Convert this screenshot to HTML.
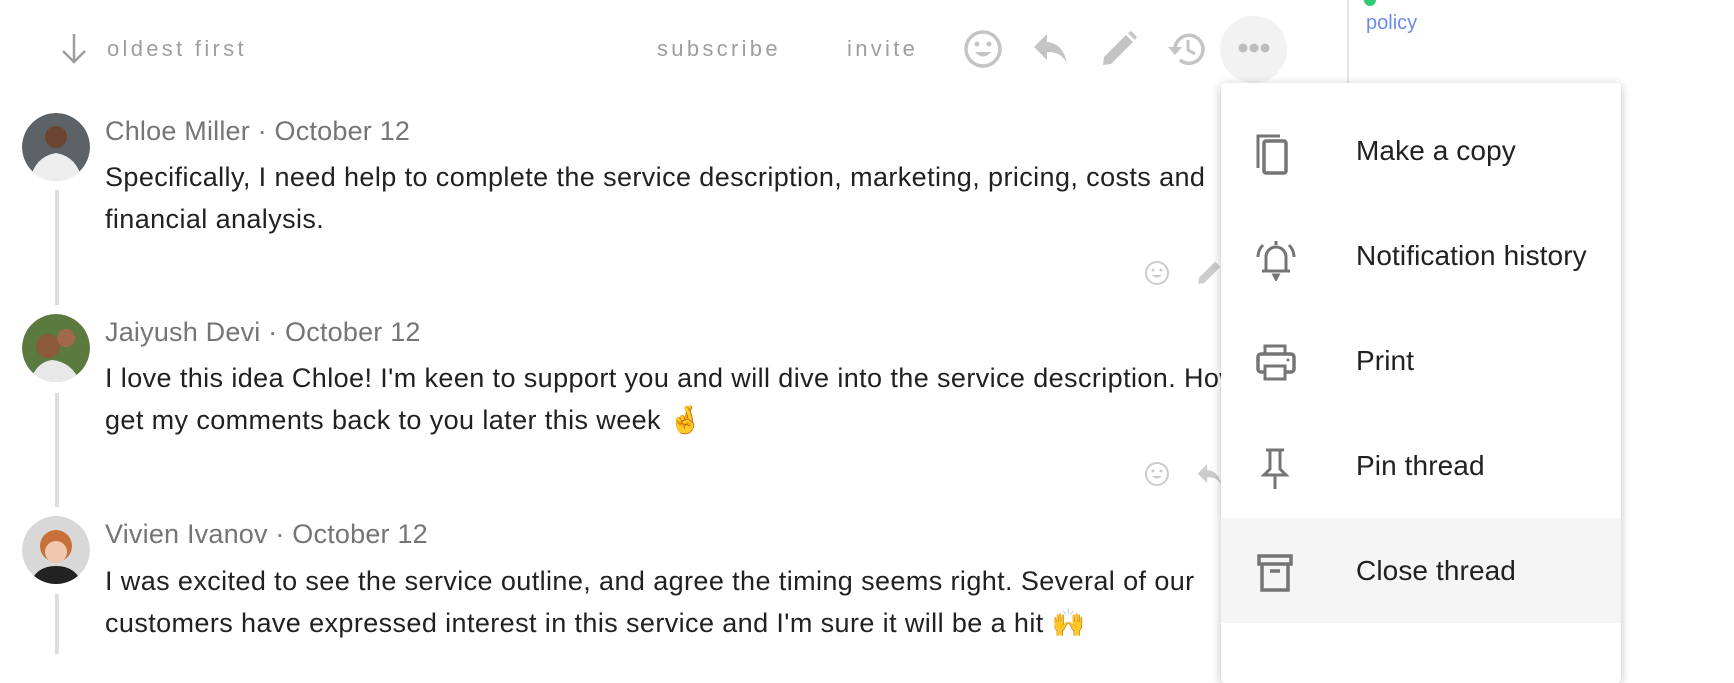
<!DOCTYPE html>
<html><head><meta charset="utf-8"><style>
*{margin:0;padding:0;box-sizing:border-box}
body{width:1734px;height:639px;overflow:hidden;background:#fff;font-family:"Liberation Sans",sans-serif;position:relative}
.abs{position:absolute}
.top{color:#9e9e9e;font-size:22px;letter-spacing:3.3px;top:36px}
.name{left:105px;font-size:27px;color:#757575;letter-spacing:0.2px;white-space:nowrap}
.body{left:105px;font-size:27px;color:#212121;line-height:42px;letter-spacing:0.4px;white-space:nowrap}
.av{left:22px;width:68px;height:68px;border-radius:50%}
.line{left:55px;width:4px;background:#ddd}
.menu{left:1221px;top:83px;width:400px;height:600px;background:#fff;border-radius:4px;box-shadow:0 2px 10px rgba(0,0,0,.25)}
.item{position:absolute;left:0;width:400px;height:105px}
.item span{position:absolute;left:135px;top:37px;font-size:28px;color:#212121;letter-spacing:0.1px}
.item svg{position:absolute;left:33px;top:34px}
</style></head><body>
<svg class="abs" style="left:58px;top:32px" width="32" height="34" viewBox="0 0 32 34"><path d="M16 2V30M5 19L16 30L27 19" stroke="#9e9e9e" stroke-width="2.5" fill="none"/></svg>
<div class="abs top" style="left:107px">oldest first</div>
<div class="abs top" style="left:657px">subscribe</div>
<div class="abs top" style="left:847px">invite</div>
<svg class="abs" style="left:963px;top:29px" width="40" height="40" viewBox="0 0 40 40"><circle cx="20" cy="20" r="17" fill="none" stroke="#c4c4c4" stroke-width="3.5"/><circle cx="14" cy="15" r="2.5" fill="#c4c4c4"/><circle cx="26" cy="15" r="2.5" fill="#c4c4c4"/><path d="M12 23Q20 32 28 23Z" fill="#c4c4c4"/></svg>
<svg class="abs" style="left:1032px;top:31px" width="38" height="36" viewBox="0 0 38 36"><path d="M15 3L2 16L15 29V21C25 21 31 24 35 33C33 21 27 12 15 11Z" fill="#c4c4c4"/></svg>
<svg class="abs" style="left:1100px;top:30px" width="38" height="38" viewBox="0 0 38 38"><path d="M3 35L4 27L26 5L33 12L11 34Z" fill="#c4c4c4"/><path d="M28 3L31 1L37 7L35 10Z" fill="#c4c4c4"/></svg>
<svg class="abs" style="left:1166px;top:29px" width="40" height="40" viewBox="0 0 40 40"><path d="M9 20A14 14 0 1 1 14 31" fill="none" stroke="#c4c4c4" stroke-width="3.5"/><path d="M2 18L9 26L16 18Z" fill="#c4c4c4"/><path d="M22 11V21L29 25" fill="none" stroke="#c4c4c4" stroke-width="3"/></svg>
<div class="abs" style="left:1220px;top:16px;width:67px;height:67px;border-radius:50%;background:#f2f2f2"></div>
<svg class="abs" style="left:1237px;top:41px" width="34" height="14"><circle cx="6" cy="7" r="4.5" fill="#bdbdbd"/><circle cx="17" cy="7" r="4.5" fill="#bdbdbd"/><circle cx="28" cy="7" r="4.5" fill="#bdbdbd"/></svg>
<div class="abs" style="left:1347px;top:0;width:2px;height:90px;background:#e6e6e6"></div>
<div class="abs" style="left:1364px;top:-6px;width:12px;height:12px;border-radius:50%;background:#2ecc71"></div>
<div class="abs" style="left:1366px;top:12px;font-size:20px;color:#6b8cf0">policy</div>

<svg class="abs av" style="top:113px" viewBox="0 0 68 68"><circle cx="34" cy="34" r="34" fill="#5d6266"/><path d="M8 68Q12 44 34 40Q56 44 60 68Z" fill="#eee"/><circle cx="34" cy="24" r="11" fill="#6b4532"/></svg>
<div class="abs line" style="top:190px;height:115px"></div>
<div class="abs name" style="top:116px">Chloe Miller · October 12</div>
<div class="abs body" style="top:156px">Specifically, I need help to complete the service description, marketing, pricing, costs and<br>financial analysis.</div>
<svg class="abs" style="left:1144px;top:260px" width="26" height="26" viewBox="0 0 26 26"><circle cx="13" cy="13" r="11" fill="none" stroke="#ccc" stroke-width="2"/><circle cx="9" cy="10" r="1.5" fill="#ccc"/><circle cx="17" cy="10" r="1.5" fill="#ccc"/><path d="M8 15Q13 20 18 15Z" fill="#ccc"/></svg>
<svg class="abs" style="left:1196px;top:258px" width="28" height="28" viewBox="0 0 38 38"><path d="M3 35L4 27L26 5L33 12L11 34Z" fill="#ccc"/></svg>

<svg class="abs av" style="top:314px" viewBox="0 0 68 68"><circle cx="34" cy="34" r="34" fill="#5a7a40"/><circle cx="26" cy="32" r="12" fill="#8a5a3a"/><circle cx="44" cy="24" r="9" fill="#a06a4a"/><path d="M8 68Q14 48 30 46Q50 48 58 68Z" fill="#e8e8e8"/></svg>
<div class="abs line" style="top:393px;height:114px"></div>
<div class="abs name" style="top:317px">Jaiyush Devi · October 12</div>
<div class="abs body" style="top:357px">I love this idea Chloe! I'm keen to support you and will dive into the service description. How<br>get my comments back to you later this week 🤞</div>
<svg class="abs" style="left:1144px;top:461px" width="26" height="26" viewBox="0 0 26 26"><circle cx="13" cy="13" r="11" fill="none" stroke="#ccc" stroke-width="2"/><circle cx="9" cy="10" r="1.5" fill="#ccc"/><circle cx="17" cy="10" r="1.5" fill="#ccc"/><path d="M8 15Q13 20 18 15Z" fill="#ccc"/></svg>
<svg class="abs" style="left:1196px;top:462px" width="28" height="26" viewBox="0 0 38 36"><path d="M15 3L2 16L15 29V21C25 21 31 24 35 33C33 21 27 12 15 11Z" fill="#ccc"/></svg>

<svg class="abs av" style="top:516px" viewBox="0 0 68 68"><circle cx="34" cy="34" r="34" fill="#d8d8d8"/><circle cx="34" cy="30" r="16" fill="#c8703a"/><circle cx="34" cy="36" r="11" fill="#f0c8b0"/><path d="M8 68Q14 50 34 50Q54 50 60 68Z" fill="#222"/></svg>
<div class="abs line" style="top:594px;height:60px"></div>
<div class="abs name" style="top:519px">Vivien Ivanov · October 12</div>
<div class="abs body" style="top:560px">I was excited to see the service outline, and agree the timing seems right. Several of our<br>customers have expressed interest in this service and I'm sure it will be a hit 🙌</div>

<div class="abs menu">
 <div class="item" style="top:15px"><svg width="40" height="44" viewBox="0 0 40 44"><path d="M4 36V4H26" fill="none" stroke="#757575" stroke-width="3"/><rect x="10" y="9" width="22" height="32" rx="2" fill="none" stroke="#757575" stroke-width="3.5"/></svg><span>Make a copy</span></div>
 <div class="item" style="top:120px"><svg width="44" height="44" viewBox="0 0 44 44"><path d="M12 34V20A10 10 0 0 1 32 20V34ZM8 34H36" fill="none" stroke="#757575" stroke-width="3"/><path d="M22 4V8M20 38H24L22 42Z" stroke="#757575" stroke-width="3" fill="#757575"/><path d="M9 8Q4 13 4 20M35 8Q40 13 40 20" fill="none" stroke="#757575" stroke-width="3"/></svg><span>Notification history</span></div>
 <div class="item" style="top:225px"><svg width="44" height="44" viewBox="0 0 44 44"><rect x="11" y="4" width="20" height="8" fill="none" stroke="#757575" stroke-width="3"/><rect x="4" y="12" width="36" height="18" rx="3" fill="none" stroke="#757575" stroke-width="3.5"/><rect x="11" y="24" width="20" height="13" fill="#fff" stroke="#757575" stroke-width="3"/><circle cx="34" cy="18" r="1.5" fill="#757575"/></svg><span>Print</span></div>
 <div class="item" style="top:330px"><svg width="44" height="44" viewBox="0 0 44 44"><path d="M12 3H30M16 3V22L10 28H32L26 22V3M21 28V42" fill="none" stroke="#757575" stroke-width="3"/></svg><span>Pin thread</span></div>
 <div class="item" style="top:435px;background:#f5f5f5"><svg width="44" height="44" viewBox="0 0 44 44"><rect x="5" y="4" width="32" height="8" fill="none" stroke="#757575" stroke-width="3.5"/><path d="M8 12V38H34V12" fill="none" stroke="#757575" stroke-width="3.5"/><path d="M16 19H26" stroke="#757575" stroke-width="3.5"/></svg><span>Close thread</span></div>
</div>
</body></html>
